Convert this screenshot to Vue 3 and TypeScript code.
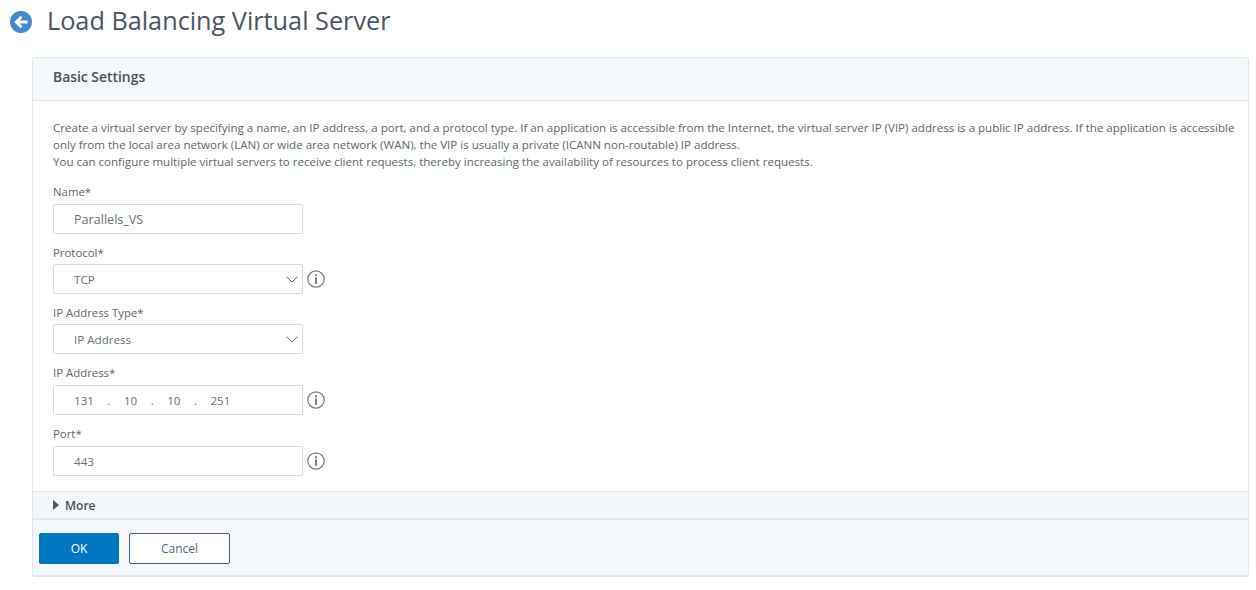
<script setup lang="ts">
interface Field {
  label: string
  kind: 'text' | 'select' | 'ip'
  value: string
  info: boolean
}
const fields: Field[] = [
  { label: 'Name*', kind: 'text', value: 'Parallels_VS', info: false },
  { label: 'Protocol*', kind: 'select', value: 'TCP', info: true },
  { label: 'IP Address Type*', kind: 'select', value: 'IP Address', info: false },
  { label: 'IP Address*', kind: 'ip', value: '', info: true },
  { label: 'Port*', kind: 'text', value: '443', info: true },
]
const octets = ['131', '10', '10', '251']
</script>

<template>
  <div class="page">
    <div class="title-row">
      <svg class="back" width="22" height="22" viewBox="0 0 22 22">
        <circle cx="11" cy="11" r="11" fill="#428bca" />
        <path d="M17.5 11H7M11.5 5.8 6.3 11l5.2 5.2" fill="none" stroke="#fff" stroke-width="2.8" />
      </svg>
      <h1>Load Balancing Virtual Server</h1>
    </div>
    <section class="card">
      <header class="card-head">Basic Settings</header>
      <div class="card-body">
        <p class="intro">
          Create a virtual server by specifying a name, an IP address, a port, and a protocol type. If an application is accessible from the Internet, the virtual server IP (VIP) address is a public IP address. If the application is accessible only from the local area network (LAN) or wide area network (WAN), the VIP is usually a private (ICANN non-routable) IP address.<br />
          You can configure multiple virtual servers to receive client requests, thereby increasing the availability of resources to process client requests.
        </p>
        <div v-for="f in fields" :key="f.label" class="field">
          <label>{{ f.label }}</label>
          <div class="control-row">
            <div class="control" :class="{ square: f.kind !== 'select' && f.label !== 'Name*' }">
              <template v-if="f.kind === 'ip'">
                <template v-for="(o, i) in octets" :key="i">
                  <span class="octet">{{ o }}</span>
                  <span v-if="i < 3" class="dot">.</span>
                </template>
              </template>
              <span v-else :class="{ 'wide-value': f.label === 'Name*' }">{{ f.value }}</span>
              <svg v-if="f.kind === 'select'" class="chev" width="12" height="7" viewBox="0 0 12 7">
                <path d="M.5.7 6 6 11.5.7" fill="none" stroke="#5c6670" stroke-width="1" />
              </svg>
            </div>
            <svg v-if="f.info" class="info" width="18" height="18" viewBox="0 0 18 18">
              <circle cx="9" cy="9" r="8.2" fill="none" stroke="#7d7d7d" stroke-width="1.2" />
              <rect x="8" y="7.4" width="2" height="6.4" fill="#7d7d7d" />
              <rect x="8" y="4.2" width="2" height="2" fill="#7d7d7d" />
            </svg>
          </div>
        </div>
      </div>
      <div class="more">
        <svg width="6" height="10" viewBox="0 0 6 10"><path d="M0 0l6 5-6 5z" fill="#555" /></svg>
        <span>More</span>
      </div>
      <footer class="actions">
        <button class="btn primary" type="button">OK</button>
        <button class="btn ghost" type="button">Cancel</button>
      </footer>
    </section>
  </div>
</template>

<style>
html, body { background: #fff; }
</style>

<style scoped>
.page {
  width: 1256px;
  height: 590px;
  overflow: hidden;
  box-sizing: border-box;
  font-family: "Open Sans", "Liberation Sans", sans-serif;
  color: #5f6670;
}
.title-row {
  display: flex;
  align-items: center;
  height: 44px;
  padding-left: 10px;
  gap: 15px;
  margin-bottom: 13px;
}
.back { flex: none; }
h1 {
  margin: 0 0 5px;
  font-size: 25.25px;
  font-weight: 400;
  color: #4d5564;
  line-height: 34px;
}
.card {
  margin: 0 7px 0 32px;
  border: 1px solid #e3e6ea;
  border-bottom-width: 2px;
  border-radius: 3px;
  background: #fff;
}
.card-head {
  height: 42px;
  line-height: 37px;
  padding-left: 20px;
  background: #f4f8fb;
  border-bottom: 1px solid #e3e6ea;
  font-size: 13.9px;
  font-weight: 600;
  color: #4c5057;
}
.card-body { padding: 18px 8px 0 20px; height: 390px; box-sizing: border-box; }
.intro {
  margin: 0 0 13px;
  font-size: 11.56px;
  line-height: 17px;
  color: #5f6670;
}
.field { margin-bottom: 9px; }
.field:nth-child(n + 5) { margin-top: 10px; }
label {
  display: block;
  font-size: 11.4px;
  line-height: 17px;
  color: #5f6670;
  margin-bottom: 4px;
}
.field:nth-child(3) label,
.field:nth-child(4) label { padding-top: 1px; margin-bottom: 3px; }
.control-row { display: flex; align-items: center; gap: 4px; }
.control {
  position: relative;
  display: flex;
  align-items: center;
  width: 250px;
  height: 30px;
  box-sizing: border-box;
  padding-left: 20px;
  border: 1px solid #d9dcdf;
  border-radius: 2px;
  font-size: 11.6px;
  color: #6a7079;
  background: #fff;
}
.wide-value { font-size: 12.6px; }
.control.square { border-radius: 1px; }
.chev { position: absolute; right: 4px; top: 11px; }
.dot { width: 30px; text-align: center; }
.info { flex: none; }
.more {
  display: flex;
  align-items: center;
  gap: 6px;
  height: 26px;
  padding-left: 20px;
  background: #f4f7f9;
  border-top: 1px solid #e3e6ea;
  font-size: 12px;
  font-weight: 600;
  color: #4c5057;
}
.actions {
  display: flex;
  align-items: center;
  gap: 10px;
  height: 57px;
  padding: 2px 0 0 6px;
  background: #f4f8fb;
  border-top: 2px solid #e3e6ea;
  box-sizing: border-box;
}
.btn {
  height: 31px;
  font: 400 12px "Open Sans", "Liberation Sans", sans-serif;
  border-radius: 2px;
  cursor: pointer;
}
.primary { width: 80px; background: #0075c2; border: 1px solid #0075c2; color: #fff; }
.ghost { width: 101px; background: #fff; border: 1px solid #3f6487; color: #4f6a8a; }
</style>
